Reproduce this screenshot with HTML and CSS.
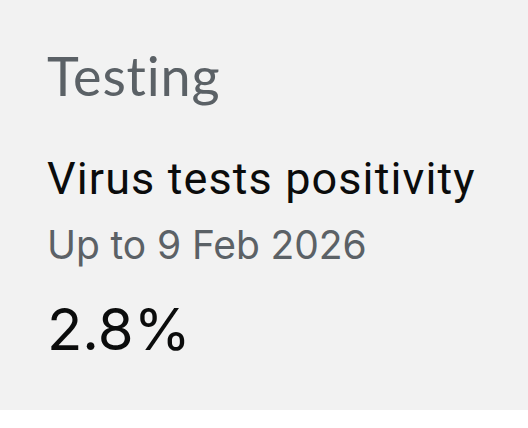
FILE: index.html
```html
<!DOCTYPE html>
<html>
<head>
<meta charset="utf-8">
<link rel="stylesheet" href="styles.css">
</head>
<body>
<section class="card">
  <h2 class="section-title">Testing</h2>
  <div class="metric">
    <h3 class="metric-name">Virus tests positivity</h3>
    <p class="metric-date">Up to 9 Feb 2026</p>
    <p class="metric-value">2.8%</p>
  </div>
</section>
</body>
</html>
```
FILE: styles.css
```css
html, body {
  margin: 0;
  padding: 0;
  background: #ffffff;
}
.card {
  box-sizing: border-box;
  height: 410px;
  background: #f2f2f2;
  padding: 0 47px;
  font-family: Roboto, "Noto Sans", sans-serif;
}
.section-title {
  margin: 0;
  padding-top: 46px;
  font-family: Lato, Roboto, sans-serif;
  font-weight: 400;
  font-size: 54px;
  line-height: 60px;
  letter-spacing: 0.8px;
  color: #5b6166;
}
.metric {
  display: flex;
  flex-direction: column;
}
.metric-name {
  margin: 0;
  margin-top: 47px;
  font-weight: 400;
  font-size: 45px;
  line-height: 52px;
  letter-spacing: 1.1px;
  color: #0b0c0c;
}
.metric-date {
  margin: 0;
  margin-top: 15px;
  font-family: Inter, Roboto, sans-serif;
  font-size: 39px;
  line-height: 50px;
  letter-spacing: -0.1px;
  color: #5b6166;
}
.metric-value {
  margin: 0;
  margin-top: 24px;
  font-family: Inter, Roboto, sans-serif;
  font-size: 58px;
  line-height: 70px;
  color: #0b0c0c;
}
```
